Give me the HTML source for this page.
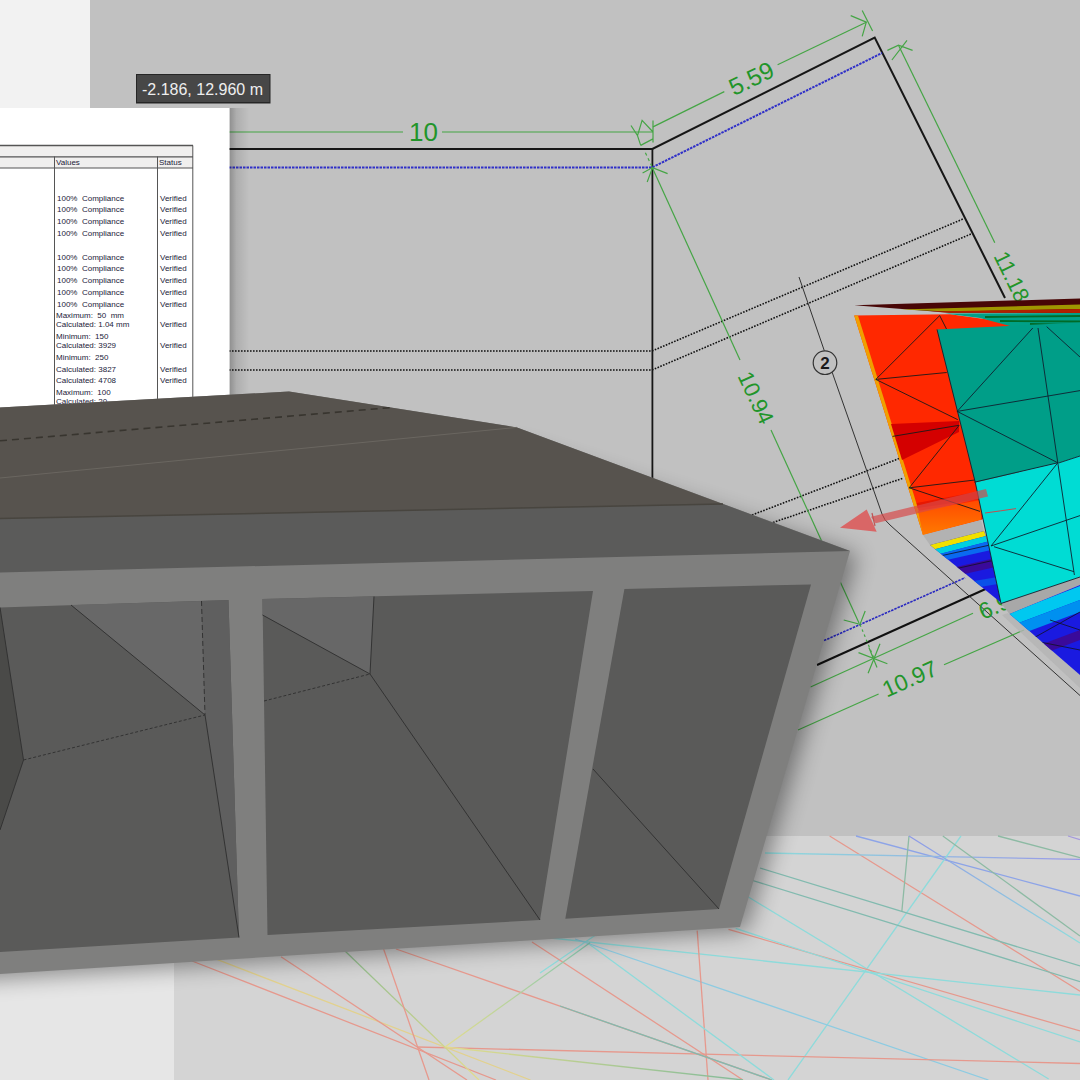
<!DOCTYPE html>
<html><head><meta charset="utf-8">
<style>
html,body{margin:0;padding:0;width:1080px;height:1080px;overflow:hidden;background:#c0c0c0;}
svg{position:absolute;left:0;top:0;display:block}
text{font-family:"Liberation Sans",sans-serif}
</style></head>
<body>
<svg width="1080" height="1080" viewBox="0 0 1080 1080">
<defs>
  <linearGradient id="gor" x1="0" y1="0" x2="0" y2="1"><stop offset="0" stop-color="#ff4a00"/><stop offset="1" stop-color="#ff7a00"/></linearGradient>
  <filter id="blur" x="-20%" y="-20%" width="140%" height="140%"><feGaussianBlur stdDeviation="11"/></filter>
  <linearGradient id="gcb" gradientUnits="userSpaceOnUse" x1="765" y1="0" x2="1080" y2="0"><stop offset="0" stop-color="#70dede"/><stop offset="1" stop-color="#8080f0"/></linearGradient>
  <linearGradient id="gbc" gradientUnits="userSpaceOnUse" x1="909" y1="836" x2="1080" y2="943"><stop offset="0" stop-color="#7080f0"/><stop offset="1" stop-color="#70e0e0"/></linearGradient>
  <linearGradient id="gyg" gradientUnits="userSpaceOnUse" x1="445" y1="0" x2="743" y2="0"><stop offset="0" stop-color="#e8e070"/><stop offset="1" stop-color="#60b080"/></linearGradient>
  <linearGradient id="ggy" gradientUnits="userSpaceOnUse" x1="345" y1="951" x2="479" y2="1080"><stop offset="0" stop-color="#70b070"/><stop offset="1" stop-color="#e8e070"/></linearGradient>
  <linearGradient id="gcy" gradientUnits="userSpaceOnUse" x1="590" y1="942" x2="445" y2="1047"><stop offset="0" stop-color="#60c0a0"/><stop offset="1" stop-color="#e8e070"/></linearGradient>

  <linearGradient id="pgr" x1="0" y1="0" x2="1" y2="0">
    <stop offset="0" stop-color="#000" stop-opacity="0.26"/>
    <stop offset="0.35" stop-color="#000" stop-opacity="0.10"/>
    <stop offset="1" stop-color="#000" stop-opacity="0"/>
  </linearGradient>
  <filter id="sh" x="-20%" y="-20%" width="140%" height="140%">
    <feGaussianBlur in="SourceAlpha" stdDeviation="10"/>
    <feOffset dx="6" dy="4" result="b"/>
    <feComponentTransfer><feFuncA type="linear" slope="0.45"/></feComponentTransfer>
    <feMerge><feMergeNode/><feMergeNode in="SourceGraphic"/></feMerge>
  </filter>
  <filter id="psh" x="-20%" y="-20%" width="140%" height="140%">
    <feGaussianBlur in="SourceAlpha" stdDeviation="6"/>
    <feOffset dx="4" dy="0"/>
    <feComponentTransfer><feFuncA type="linear" slope="0.35"/></feComponentTransfer>
    <feMerge><feMergeNode/><feMergeNode in="SourceGraphic"/></feMerge>
  </filter>
</defs>

<!-- backgrounds -->
<rect x="0" y="0" width="1080" height="1080" fill="#c1c1c1"/>
<rect x="0" y="0" width="90" height="420" fill="#f2f2f2"/>

<!-- floor -->
<rect x="0" y="836" width="1080" height="244" fill="#d4d4d4"/>
<rect x="0" y="836" width="174" height="244" fill="#e6e6e6"/>

<!-- CAD drawing -->
<g id="cad" fill="none">
  <!-- black outline -->
  <polyline points="229,149 652.4,149 874.7,37.5 1005,298" stroke="#161616" stroke-width="2"/>
  <line x1="652.4" y1="149" x2="652.4" y2="500" stroke="#161616" stroke-width="1.8"/>
  <!-- blue dotted -->
  <polyline points="229,167.5 652,167.5 882,53" stroke="#3030c8" stroke-width="2" stroke-dasharray="2.5 1"/>
  <!-- dotted black -->
  <polyline points="229,351 652,351 963,219" stroke="#111" stroke-width="1.6" stroke-dasharray="1.6 1.4"/>
  <polyline points="229,370 652,370 971,234" stroke="#111" stroke-width="1.6" stroke-dasharray="1.6 1.4"/>
  <polyline points="752,515 899,458.6" stroke="#111" stroke-width="1.6" stroke-dasharray="1.6 1.4"/>
  <polyline points="773,522.5 903.6,478" stroke="#111" stroke-width="1.6" stroke-dasharray="1.6 1.4"/>
  <!-- bottom lines -->
  <line x1="817" y1="665" x2="990" y2="587" stroke="#111" stroke-width="2"/>
  <line x1="824" y1="640.6" x2="965" y2="577.8" stroke="#2828c0" stroke-width="1.6" stroke-dasharray="2.5 1"/>
  <!-- axis line -->
  <path d="M799,277 L824.3,350.7 M832.1,372.1 L882,514 Q884,520 890,525 L1080,695.5" stroke="#333" stroke-width="1"/>
  <circle cx="825" cy="362.7" r="11.8" stroke="#333" stroke-width="1.2" fill="none"/>
  <text x="825" y="369" font-size="17" font-weight="bold" fill="#1a1a1a" text-anchor="middle">2</text>

  <!-- green dims -->
  <g stroke="#45a545" stroke-width="1.2">
    <line x1="229" y1="132" x2="403" y2="132"/>
    <line x1="442" y1="132" x2="653" y2="132"/>
    <path d="M631,125.5 L637.5,135.6 L642.1,120.4 L653,132 M640.7,145.4 L637.5,135.6 M640.7,145.4 L653,138.9 M653,120.4 L653,142.6"/>
    <line x1="653" y1="126.9" x2="724.3" y2="91.6"/>
    <line x1="777.6" y1="64.7" x2="866.3" y2="22.2"/>
    <path d="M850.7,15.6 L866.3,22.2 L862.2,36.3 M862.2,10.4 L872.6,31.1"/>
    
    <line x1="898.5" y1="45.2" x2="994.8" y2="242.8"/>
    <path d="M887.4,50.4 L898.5,45.2 L912.6,50.4 M907,40.4 L891.9,60"/>
    <line x1="652" y1="167" x2="740" y2="360"/>
    <line x1="771" y1="430" x2="859" y2="623"/>
    <path d="M642.6,173.1 L652.5,167.6 L667.6,173.6 M652.5,167.6 L647.2,182"/><line x1="645.4" y1="152.8" x2="652.5" y2="167.6" stroke-dasharray="3 3"/>
    <line x1="860" y1="624.4" x2="874" y2="658.5" stroke-dasharray="2.5 3"/>
    <path d="M843.7,620 L860,624.4 L865.2,611 M858.5,652.6 L887.4,663.7 M880,643.7 L868.1,673.3 M868.9,647.4 L877,667.4"/>
    
    <line x1="810.5" y1="687" x2="973" y2="613.3"/>
    <line x1="798" y1="730" x2="878.6" y2="694"/>
    <line x1="944" y1="664.7" x2="1024" y2="630"/>
  </g>
  <g fill="#22952a">
    <text x="423.5" y="141" text-anchor="middle" font-size="26">10</text>
    <text x="0" y="0" text-anchor="middle" font-size="24" transform="translate(755,86) rotate(-26)">5.59</text>
    <text x="0" y="0" text-anchor="middle" font-size="22" transform="translate(1005,280) rotate(64)">11.18</text>
    <text x="0" y="0" text-anchor="middle" font-size="22" transform="translate(749,401) rotate(65)">10.94</text>
    <text x="0" y="0" text-anchor="middle" font-size="23" transform="translate(913,686) rotate(-24)">10.97</text>
    <text x="0" y="0" text-anchor="start" font-size="23" transform="translate(983,620) rotate(-24)">6.94</text>
  </g>
</g>

<!-- FEM mesh -->
<g id="mesh">
  <!-- top sliver -->
  <polygon points="854.2,305.3 1080,298.5 1080,313 950,312.7" fill="#480606"/>
  <polygon points="900,309.5 1080,304.5 1080,309 950,311.5" fill="#b0b000" opacity="0.85"/>
  <polygon points="930,311.5 1080,309 1080,313 950,312.7" fill="#b02000"/>
  <!-- red panel -->
  <polygon points="854.2,315.5 950,314.3 1013,323 1020,500 981,520 923,535" fill="#ff2800"/>
  <polygon points="854.2,315.5 858,315.5 926,534 923,535" fill="#f0a000"/>
  <polygon points="891,424 959,421 959,432 902,460" fill="#d40000"/>
  <polygon points="916.7,503 981,491 981,499 917.5,508" fill="#e81800"/>
  <polygon points="918,511 981,500 981,519.7 923,535" fill="url(#gor)"/>
  <g stroke="#1a1a1a" stroke-width="0.9" fill="none">
    <path d="M875.8,379.4 L939.7,315.6 M875.8,379.4 L946.7,372.5 M875.8,379.4 L957.8,419.7 M939.7,315.6 L946.7,329.4 M909.2,487.8 L959.2,425.3 M909.2,487.8 L980,479.4 M909.2,487.8 L980,511.4 M892.5,436.4 L959,425.3"/>
  </g>
  <!-- gray strip + rainbow -->
  <polygon points="923,535 981,520 984,531 930,545" fill="#b2b2b2"/>
  <clipPath id="w1"><polygon points="930,545 984,531 1010,605 1002,603.6"/></clipPath>
  <g clip-path="url(#w1)">
    <rect x="920" y="520" width="100" height="90" fill="#1a1ae0"/>
    <polygon points="920,546 990,528 990,535 920,553" fill="#f0e000"/>
    <polygon points="920,553 990,535 990,541 920,559" fill="#00d0e0"/>
    <polygon points="920,559 990,541 1000,548 920,566" fill="#0a6af0"/>
    <polygon points="920,575 1000,557 1000,566 920,584" fill="#3a0a9a"/>
    <polygon points="920,590 1010,575 1010,582 920,597" fill="#0a50e8"/>
    <path d="M940,556 L990,545 M950,570 L995,560" stroke="#112" stroke-width="0.8"/>
  </g>
  <!-- band above teal -->
  <polygon points="945,313.5 1080,313 1080,328 1010,326 980,318" fill="#00a088"/>
  <path d="M985,317 L1080,316 M1000,321 L1080,321.5 M1030,324 L1080,325" stroke="#006a28" stroke-width="1.8" fill="none"/>
  <!-- teal panel -->
  <polygon points="937,329.4 1080,322.5 1080,456 1058.6,463 975.3,482.5" fill="#009e88"/>
  <!-- cyan panel -->
  <polygon points="975.3,482.5 1058.6,463 1080,456 1080,577 1001,603.5" fill="#00dcd4"/>
  <polygon points="1001,603.5 1080,577 1080,585 1009.6,614" fill="#a8a8a8"/>
  <polygon points="1008,613 1080,675 1080,688 1002,615" fill="#b4b4b4" opacity="0.8"/>
  <!-- lower wedge -->
  <clipPath id="w2"><polygon points="1009.6,614 1080,585 1080,675"/></clipPath>
  <g clip-path="url(#w2)">
    <rect x="1000" y="580" width="80" height="100" fill="#1a1ae0"/>
    <polygon points="1000,617 1080,586 1080,600 1000,630" fill="#00c8f0"/>
    <polygon points="1000,630 1080,600 1080,612 1000,642" fill="#0090f0"/>
    <polygon points="1000,660 1080,630 1080,640 1000,670" fill="#3a0a9a"/>
    <path d="M1030,640 L1080,612 M1030,640 L1080,650 M1050,620 L1080,630" stroke="#112" stroke-width="0.8"/>
  </g>
  <g stroke="#102030" stroke-width="0.9" fill="none">
    <path d="M937,329.4 L975.3,482.5 L1001,603.5 M1001,603.5 L1080,577 M957.2,411.4 L1032.8,328 M957.2,411.4 L1080,390.6 M957.2,411.4 L1057.8,462.8 M1038,328 L1057.8,462.8 L1074.4,575 M1058.6,463 L1080,456 M1046.7,326.7 L1080,357 M974.4,482.2 L1057.8,462.8 M1057.8,462.8 L991,546 M991,546 L1080,515.6 M994,546.7 L1074,571.7"/>
  </g>
  <path d="M985,513 Q1000,511 1016,508.6" stroke="#c05050" stroke-width="1" fill="none"/>
  <!-- arrow -->
  <g opacity="0.8">
    <polygon points="871,516.7 986,489 988,496.5 875.6,523.3" fill="#d84848" opacity="0.85"/>
    <polygon points="840,527.8 866.7,509.4 876.7,531.7" fill="#e05050"/>
    <line x1="872" y1="513" x2="875" y2="526" stroke="#c03838" stroke-width="1.2"/>
  </g>
</g>

<!-- floor lines -->
<g id="floorlines" fill="none" stroke-width="1.3" opacity="0.7">
  <line x1="829.6" y1="836" x2="1080" y2="991.3" stroke="#ee8070"/>
  <line x1="856" y1="836" x2="1080" y2="896" stroke="#7090f0"/>
  <line x1="765" y1="853" x2="1080" y2="859.4" stroke="url(#gcb)"/>
  <line x1="909" y1="836" x2="901.8" y2="911.8" stroke="#70b090"/>
  <line x1="961" y1="836" x2="788" y2="1080" stroke="#70dede"/>
  <line x1="909" y1="836" x2="1080" y2="943" stroke="url(#gbc)"/>
  <line x1="942.8" y1="836" x2="1080" y2="936" stroke="#70b090"/>
  <line x1="998" y1="836" x2="1080" y2="857.7" stroke="#70b090"/>
  <line x1="1068" y1="836" x2="1080" y2="839.6" stroke="#9080e0"/>
  <line x1="760" y1="868" x2="1080" y2="966" stroke="#60b0a0"/>
  <line x1="751" y1="880" x2="1080" y2="981.7" stroke="#60b0a0"/>
  <line x1="746.7" y1="896" x2="1048.7" y2="1079" stroke="#70dede"/>
  <line x1="728.5" y1="929.4" x2="1080" y2="1031" stroke="#ee8070"/>
  <line x1="551" y1="938" x2="1080" y2="995" stroke="#70dede"/>
  <line x1="735.7" y1="928.4" x2="1080" y2="1042" stroke="#70dede"/>
  <line x1="575" y1="939" x2="988.5" y2="1080" stroke="#70c8e8"/>
  <line x1="417.7" y1="1047" x2="1080" y2="1063.5" stroke="#ee8070"/>
  <line x1="697.2" y1="930.6" x2="708" y2="1080" stroke="#ee8070"/>
  <line x1="540" y1="973" x2="600" y2="932" stroke="#70dede"/>
  <line x1="589" y1="944" x2="774" y2="1080" stroke="#70dede"/>
  <line x1="532" y1="942" x2="743" y2="1080" stroke="#ee8070"/>
  <line x1="396" y1="949" x2="772" y2="1080" stroke="#ee8070"/>
  <line x1="560" y1="1006" x2="772" y2="1080" stroke="#60b0a0"/>
  <line x1="445" y1="1047" x2="743" y2="1080" stroke="url(#gyg)"/>
  <line x1="192" y1="961" x2="496" y2="1080" stroke="#ee8070"/>
  <line x1="217.5" y1="959.7" x2="530.5" y2="1080" stroke="#e8d070"/>
  <line x1="281" y1="956.7" x2="467" y2="1080" stroke="#ee8070"/>
  <line x1="345" y1="951" x2="479" y2="1080" stroke="url(#ggy)"/>
  <line x1="383.6" y1="949" x2="429" y2="1080" stroke="#ee8070"/>
  <line x1="590" y1="942.7" x2="445" y2="1047" stroke="url(#gcy)"/>
</g>

<!-- paper -->
<rect x="229.5" y="108" width="20" height="320" fill="url(#pgr)"/>
<rect x="0" y="108" width="229.5" height="320" fill="#ffffff"/>
<g id="table" stroke="#555" stroke-width="1" fill="none">
  <rect x="-2" y="145.5" width="195" height="11" fill="#f0efee" stroke="none"/>
  <rect x="-2" y="156.5" width="195" height="11.5" fill="#f0efee" stroke="none"/>
  <line x1="0" y1="145.5" x2="193" y2="145.5" stroke-width="1.4"/>
  <line x1="0" y1="156.8" x2="193" y2="156.8" stroke-width="1.2"/>
  <line x1="0" y1="168" x2="193" y2="168" stroke-width="1.2"/>
  <line x1="54.5" y1="156.5" x2="54.5" y2="420"/>
  <line x1="157.5" y1="156.5" x2="157.5" y2="420"/>
  <line x1="192.8" y1="145.5" x2="192.8" y2="420"/>
</g>
<g fill="#22223a" font-size="8">
  <text x="56" y="165">Values</text>
  <text x="159" y="165">Status</text>
  <text x="57" y="200.5" xml:space="preserve">100%  Compliance</text>
  <text x="57" y="212.3" xml:space="preserve">100%  Compliance</text>
  <text x="57" y="224" xml:space="preserve">100%  Compliance</text>
  <text x="57" y="235.8" xml:space="preserve">100%  Compliance</text>
  <text x="57" y="259.5" xml:space="preserve">100%  Compliance</text>
  <text x="57" y="271.3" xml:space="preserve">100%  Compliance</text>
  <text x="57" y="283" xml:space="preserve">100%  Compliance</text>
  <text x="57" y="294.8" xml:space="preserve">100%  Compliance</text>
  <text x="57" y="306.5" xml:space="preserve">100%  Compliance</text>
  <text x="56" y="318.3" xml:space="preserve">Maximum:  50  mm</text>
  <text x="56" y="327.3" xml:space="preserve">Calculated: 1.04 mm</text>
  <text x="56" y="339" xml:space="preserve">Minimum:  150</text>
  <text x="56" y="348" xml:space="preserve">Calculated: 3929</text>
  <text x="56" y="360" xml:space="preserve">Minimum:  250</text>
  <text x="56" y="371.5" xml:space="preserve">Calculated: 3827</text>
  <text x="56" y="383" xml:space="preserve">Calculated: 4708</text>
  <text x="56" y="395" xml:space="preserve">Maximum:  100</text>
  <text x="56" y="403.5" xml:space="preserve">Calculated: 20</text>
  <text x="160" y="200.5">Verified</text>
  <text x="160" y="212.3">Verified</text>
  <text x="160" y="224">Verified</text>
  <text x="160" y="235.8">Verified</text>
  <text x="160" y="259.5">Verified</text>
  <text x="160" y="271.3">Verified</text>
  <text x="160" y="283">Verified</text>
  <text x="160" y="294.8">Verified</text>
  <text x="160" y="306.5">Verified</text>
  <text x="160" y="327.3">Verified</text>
  <text x="160" y="348">Verified</text>
  <text x="160" y="371.5">Verified</text>
  <text x="160" y="383">Verified</text>
</g>

<!-- tooltip -->
<rect x="136" y="74" width="134.5" height="29.5" fill="#262626"/>
<rect x="137" y="75" width="132.5" height="27" fill="#474747"/>
<text x="142" y="95" font-size="16" fill="#eeeeee">-2.186, 12.960 m</text>

<!-- 3D box -->
<polygon points="-60,440 289,420 517,445 850,551 740,927 -60,978" fill="#000" opacity="0.4" filter="url(#blur)" transform="translate(7,4)"/>
<polygon points="0,407.5 289,391.5 517,427.4 850,551 740,927 0,974" fill="#7f7f7e"/>
<g id="boxdetail">
  <!-- top face -->
  <polygon points="0,407.5 289,391.5 517,427.4 723,504 0,518.6" fill="#57534e"/>
  <!-- band -->
  <polygon points="0,518.6 723,504 850,551 0,572.6" fill="#5b5b5a"/>
  <line x1="0" y1="518.6" x2="723" y2="504" stroke="#48453f" stroke-width="1.5"/>
  <line x1="0" y1="440.8" x2="393" y2="407.4" stroke="#38352f" stroke-width="1.6" stroke-dasharray="7 5"/>
  <line x1="0" y1="478" x2="516.7" y2="427.4" stroke="#6a6660" stroke-width="1"/>
  <!-- cell 1 -->
  <polygon points="0,607.5 228.5,600 239,937.5 0,952" fill="#5a5a59"/>
  <polygon points="0,607.5 23.5,760 0,830" fill="#4a4a48"/>
  <polygon points="71,605 201.5,601 205,715" fill="#686868"/>
  <polygon points="201.5,601 228.5,600 239,937.5 205,715" fill="#5f5f5f"/>
  <g stroke="#333" stroke-width="1" fill="none">
    <line x1="71" y1="605" x2="205" y2="715"/>
    <line x1="23.5" y1="760" x2="205" y2="715" stroke-dasharray="3 2"/>
    <line x1="201.5" y1="601" x2="205" y2="715" stroke-dasharray="5 3"/>
    <line x1="205" y1="715" x2="239" y2="937.5"/>
    <line x1="23.5" y1="760" x2="0" y2="830"/>
    <line x1="0" y1="607.5" x2="23.5" y2="760"/>
  </g>
  <!-- cell 2 -->
  <polygon points="262.5,599 593,591 540,920 267.5,935" fill="#5a5a59"/>
  <polygon points="262.5,599 374,596.5 370,674 262.5,615" fill="#676767"/>
  <g stroke="#333" stroke-width="1" fill="none">
    <line x1="262.5" y1="615" x2="370" y2="674"/>
    <line x1="374" y1="596.5" x2="370" y2="674"/>
    <line x1="264" y1="701" x2="370" y2="674" stroke-dasharray="3 2"/>
    <line x1="370" y1="674" x2="540" y2="920"/>
  </g>
  <!-- cell 3 -->
  <polygon points="624.4,588.9 811,584.4 719,909 565.3,918.7" fill="#5a5a59"/>
  <line x1="593" y1="769" x2="719" y2="909" stroke="#333" stroke-width="1"/>
</g>
</svg>
</body></html>
